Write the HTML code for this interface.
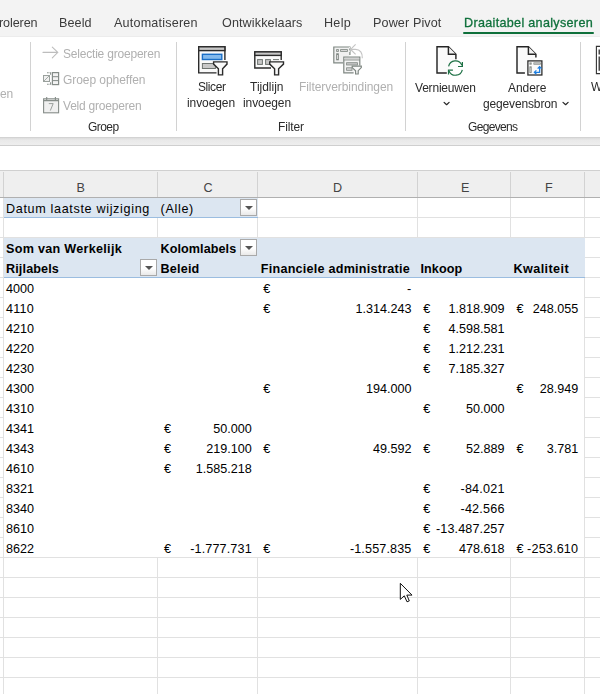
<!DOCTYPE html>
<html><head><meta charset="utf-8"><title>Excel</title>
<style>
html,body{margin:0;padding:0;}
body{width:600px;height:694px;overflow:hidden;position:relative;background:#fff;font-family:"Liberation Sans",sans-serif;}
.t{position:absolute;white-space:nowrap;line-height:normal;}
.g{will-change:transform;}
.a{position:absolute;}
.dd{position:absolute;width:15px;height:15px;border:1px solid #a9a9a9;background:linear-gradient(#fff 55%,#e9e9e9);}
.dd:after{content:"";position:absolute;left:3.6px;top:6.1px;border-left:4px solid transparent;border-right:4px solid transparent;border-top:4.4px solid #555;}
</style></head><body>
<!-- tab bar -->
<div class="a" style="left:0;top:0;width:600px;height:36px;background:#f3f3f3"></div>
<div class="a" style="left:0;top:36px;width:600px;height:1px;background:#ececec;z-index:1"></div>
<div class="a" style="left:463px;top:31.8px;width:131px;height:2.3px;background:#0f703b;border-radius:1.2px"></div>
<!-- ribbon -->
<div class="a" style="left:0;top:36px;width:600px;height:101px;background:#fff"></div>
<div class="a" style="left:0;top:137px;width:600px;height:8px;background:linear-gradient(#cdcdcd,#dfdfdf 18%,#e9e9e9 40%,#eeeeee)"></div>
<div class="a" style="left:0;top:145px;width:600px;height:1px;background:#cfcfcf"></div>
<div class="a" style="left:0;top:170px;width:600px;height:1px;background:#d0d0d0"></div>
<!-- ribbon separators -->
<div class="a" style="left:30px;top:42px;width:1px;height:89px;background:#d2d2d2"></div>
<div class="a" style="left:176px;top:42px;width:1px;height:89px;background:#d2d2d2"></div>
<div class="a" style="left:405px;top:42px;width:1px;height:89px;background:#d2d2d2"></div>
<div class="a" style="left:580px;top:42px;width:1px;height:89px;background:#d2d2d2"></div>
<!-- column header -->
<div class="a" style="left:0;top:171px;width:600px;height:26px;background:#efefef"></div>
<div class="a" style="left:0;top:197px;width:600px;height:1px;background:#b0b0b0"></div>
<!-- grid -->
<div class="a" style="left:0;top:217px;width:600px;height:1px;background:#e1e1e1"></div>
<div class="a" style="left:0;top:237px;width:600px;height:1px;background:#e1e1e1"></div>
<div class="a" style="left:0;top:257px;width:600px;height:1px;background:#e1e1e1"></div>
<div class="a" style="left:0;top:277px;width:600px;height:1px;background:#e1e1e1"></div>
<div class="a" style="left:0;top:297px;width:600px;height:1px;background:#e1e1e1"></div>
<div class="a" style="left:0;top:317px;width:600px;height:1px;background:#e1e1e1"></div>
<div class="a" style="left:0;top:337px;width:600px;height:1px;background:#e1e1e1"></div>
<div class="a" style="left:0;top:357px;width:600px;height:1px;background:#e1e1e1"></div>
<div class="a" style="left:0;top:377px;width:600px;height:1px;background:#e1e1e1"></div>
<div class="a" style="left:0;top:397px;width:600px;height:1px;background:#e1e1e1"></div>
<div class="a" style="left:0;top:417px;width:600px;height:1px;background:#e1e1e1"></div>
<div class="a" style="left:0;top:437px;width:600px;height:1px;background:#e1e1e1"></div>
<div class="a" style="left:0;top:457px;width:600px;height:1px;background:#e1e1e1"></div>
<div class="a" style="left:0;top:477px;width:600px;height:1px;background:#e1e1e1"></div>
<div class="a" style="left:0;top:497px;width:600px;height:1px;background:#e1e1e1"></div>
<div class="a" style="left:0;top:517px;width:600px;height:1px;background:#e1e1e1"></div>
<div class="a" style="left:0;top:537px;width:600px;height:1px;background:#e1e1e1"></div>
<div class="a" style="left:0;top:557px;width:600px;height:1px;background:#e1e1e1"></div>
<div class="a" style="left:0;top:577px;width:600px;height:1px;background:#e1e1e1"></div>
<div class="a" style="left:0;top:597px;width:600px;height:1px;background:#e1e1e1"></div>
<div class="a" style="left:0;top:617px;width:600px;height:1px;background:#e1e1e1"></div>
<div class="a" style="left:0;top:637px;width:600px;height:1px;background:#e1e1e1"></div>
<div class="a" style="left:0;top:657px;width:600px;height:1px;background:#e1e1e1"></div>
<div class="a" style="left:0;top:677px;width:600px;height:1px;background:#e1e1e1"></div>
<div class="a" style="left:3px;top:198px;width:1px;height:496px;background:#e1e1e1"></div>
<div class="a" style="left:3px;top:172px;width:1px;height:25px;background:#d2d2d2"></div>
<div class="a" style="left:157px;top:198px;width:1px;height:496px;background:#e1e1e1"></div>
<div class="a" style="left:157px;top:172px;width:1px;height:25px;background:#d2d2d2"></div>
<div class="a" style="left:257px;top:198px;width:1px;height:496px;background:#e1e1e1"></div>
<div class="a" style="left:257px;top:172px;width:1px;height:25px;background:#d2d2d2"></div>
<div class="a" style="left:417px;top:198px;width:1px;height:496px;background:#e1e1e1"></div>
<div class="a" style="left:417px;top:172px;width:1px;height:25px;background:#d2d2d2"></div>
<div class="a" style="left:510px;top:198px;width:1px;height:496px;background:#e1e1e1"></div>
<div class="a" style="left:510px;top:172px;width:1px;height:25px;background:#d2d2d2"></div>
<div class="a" style="left:584px;top:198px;width:1px;height:496px;background:#e1e1e1"></div>
<div class="a" style="left:584px;top:172px;width:1px;height:25px;background:#d2d2d2"></div>
<div class="a" style="left:4px;top:198px;width:254px;height:19px;background:#dce6f1"></div>
<div class="a" style="left:4px;top:217px;width:254px;height:1px;background:#9bbde0"></div>
<div class="a" style="left:4px;top:238px;width:581px;height:39px;background:#dce6f1"></div>
<div class="a" style="left:4px;top:277px;width:581px;height:1px;background:#9bbde0"></div>
<div class="a" style="left:4px;top:278px;width:580px;height:279px;background:#fff"></div>
<!--GRID-->
<!--ICONS-->
<svg class="a" style="left:0;top:0" width="600" height="140" viewBox="0 0 600 140" fill="none">
<!-- arrow (disabled) -->
<g stroke="#bdbdbd" stroke-width="1.1" stroke-linecap="round" stroke-linejoin="round">
<path d="M43 52.4H57.8M52.3 47.2L57.8 52.4L52.3 57.8"/>
</g>
<!-- group opheffen -->
<g stroke="#9aa19d" stroke-width="1">
<rect x="43.5" y="75.5" width="6" height="6" fill="#f0f0f0"/>
<path d="M44 81L49 76" stroke-width="0.9"/>
<path d="M47 72.8H48.7M49.5 72.8H50.6V74.7M47 84.2H48.7M49.5 84.2H50.6V82.3" stroke="#8d948f" stroke-width="1.1"/>
<rect x="52.4" y="72.6" width="6.2" height="12" stroke="#858c88" stroke-width="1.2" fill="#f3f3f3"/>
<path d="M52.4 76.7H58.6M52.4 80.6H58.6" stroke="#858c88"/>
</g>
<!-- calendar -->
<g stroke="#868d89" stroke-width="1.1">
<rect x="43.6" y="98.8" width="15" height="14" fill="#f0f0f0"/>
<path d="M43.6 100.6H58.6" stroke-width="1.3"/>
<path d="M46.7 97V100M55.4 97V100"/>
<path d="M48.8 103.6H53.2L50.3 110.6" stroke="#9a9f9c" stroke-width="1"/>
</g>
<!-- slicer -->
<g stroke="#2b2b2b" stroke-width="1.4" stroke-linejoin="miter">
<path d="M216.5 72.9H198.7V46.8H224.9V60" fill="#fafafa"/>
<rect x="198.7" y="46.8" width="26.2" height="3.8" fill="#c8c8c8"/>
<rect x="202.4" y="54.3" width="19.4" height="5.2" fill="#83b9ec" stroke="#1a6ec6"/>
<rect x="202.4" y="63.5" width="13" height="5" fill="#c8c8c8" stroke="#6e7471" stroke-width="1"/>
<path d="M213.6 61.9H227V64.1L222.6 68.8V74.9H218.4V68.8L213.6 64.1Z" fill="#fafafa"/>
</g>
<!-- tijdlijn -->
<g stroke="#2b2b2b" stroke-width="1.4">
<path d="M271 68H254.8V51.9H281.2V60" fill="#fafafa"/>
<rect x="254.8" y="51.9" width="26.4" height="3.5" fill="#c8c8c8"/>
<rect x="257.6" y="59.6" width="4.8" height="4.8" fill="#c8c8c8" stroke="#6e7471" stroke-width="1"/>
<rect x="265.6" y="59.6" width="4.8" height="4.8" fill="#c8c8c8" stroke="#6e7471" stroke-width="1"/>
<path d="M273 59.6H279" stroke="#6e7471" stroke-width="1"/>
<path d="M269.7 61.9H283.5V64.1L278.6 68.8V74.9H274.6V68.8L269.7 64.1Z" fill="#fafafa"/>
</g>
<!-- filterverbindingen (disabled) -->
<g stroke="#7f8782" stroke-width="1.2">
<path d="M343 62.8H333.8V47H349.9V55" fill="#f0f0f0"/>
<rect x="336.6" y="49.6" width="1.9" height="1.9" fill="#d6d6d6" stroke-width="0.8"/>
<rect x="340.6" y="49.6" width="6.9" height="1.9" fill="#d6d6d6" stroke-width="0.8"/>
<rect x="336.6" y="53.7" width="1.9" height="6.2" fill="#d6d6d6" stroke-width="0.8"/>
<path d="M348.6 47.6L350.6 49.4L348.6 51.2L350 52V47Z" fill="#fff" stroke="none"/>
<path d="M355.6 44.4L350.6 49.4L355.6 54.4" stroke="#c4c4c4" stroke-width="1.15"/>
<path d="M350.8 49.4H355.5C360.3 49.4 362.6 53 362.3 58.2" stroke="#c4c4c4" stroke-width="1.15"/>
<path d="M353.6 72.9H343.8V57.1H359.8V65.4" fill="#f4f4f4"/>
<path d="M344.4 58.6H359.2" stroke="#d2d2d2" stroke-width="1.9"/>
<path d="M343.8 60H359.8" stroke-width="0.8"/>
<rect x="346.6" y="62.7" width="10.8" height="2.3" fill="#c6c6c6" stroke-width="0.8"/>
<rect x="346.6" y="67.8" width="5.4" height="2.5" fill="#d4d4d4" stroke-width="0.8"/>
<path d="M352.2 66.1H361.3V67.6L358.2 70.7V74H355.6V70.7L352.2 67.6Z" fill="#fafafa" stroke-width="1.2"/>
</g>
<!-- vernieuwen -->
<g stroke="#262626" stroke-width="1.45">
<path d="M446.8 72.9H437V46.8H448.4L455.9 54.2V59.2" fill="#fafafa"/>
<path d="M448.4 46.8V54.2H455.9" fill="#f3f3f3"/>
</g>
<g stroke="#1e7145" stroke-width="1.2">
<path d="M448.6 66.3A7 7 0 0 1 461.9 65.2"/>
<path d="M462.3 69.8A7 7 0 0 1 449 70.9"/>
<path d="M458 66.5H462.4V62.1"/>
<path d="M452.9 70.1H448.5V74.5"/>
</g>
<!-- andere gegevensbron -->
<g stroke="#262626" stroke-width="1.45">
<path d="M524.9 72.9H517V46.8H528.4L535.9 54.2V57.6" fill="#fafafa"/>
<path d="M528.4 46.8V54.2H535.9" fill="#f3f3f3"/>
<rect x="527.9" y="60.9" width="14" height="14.1" fill="#fafafa" stroke-width="1.25"/>
</g>
<g stroke="#868d89" stroke-width="0.7" fill="#c6c6c6">
<rect x="529.8" y="62.8" width="1.5" height="1.5"/>
<rect x="533.8" y="62.8" width="6.8" height="1.5"/>
<rect x="529.8" y="66.7" width="1.5" height="6"/>
</g>
<g stroke="#1f7fe0" stroke-width="1.3" fill="none">
<path d="M534.8 72.3H539.6V67"/>
<path d="M536.4 70.4L534.4 72.3L536.4 74.2M537.7 68.6L539.6 66.6L541.5 68.6"/>
</g>
<!-- chevrons -->
<g stroke="#262626" stroke-width="1.25" fill="none" stroke-linecap="round" stroke-linejoin="round">
<path d="M444.1 102.4L446.6 104.7L449.1 102.4"/>
<path d="M563 102.4L565.6 104.7L568.1 102.4"/>
</g>
<!-- right cutoff icon -->
<g stroke="#333" stroke-width="1.1">
<path d="M601 46.4H596.4V73.6H601"/>
<path d="M599.4 49.6V54.6M599.4 56.4V70.8" stroke="#4a4a4a" stroke-width="1.8"/>
</g>
</svg>
<!-- dropdown buttons -->
<div class="dd" style="left:240px;top:199px"></div>
<div class="dd" style="left:240px;top:239px"></div>
<div class="dd" style="left:140px;top:259px"></div>
<!-- cursor -->
<svg class="a" style="left:398px;top:581px" width="18" height="24" viewBox="0 0 18 24">
<path d="M2.3 2.3V18.4L6.3 14.8L9 20.8L11.3 19.9L8.8 14.1H14Z" fill="#fff" stroke="#111" stroke-width="1" stroke-linejoin="miter"/>
</svg>
<span class="t g" style="left:-1.50px;top:15.60px;font-size:12.6px;color:#3b3b3b;letter-spacing:-0.100px;">roleren</span>
<span class="t g" style="left:58.90px;top:15.60px;font-size:12.6px;color:#3b3b3b;letter-spacing:0.076px;">Beeld</span>
<span class="t g" style="left:113.90px;top:15.60px;font-size:12.6px;color:#3b3b3b;letter-spacing:0.192px;">Automatiseren</span>
<span class="t g" style="left:221.50px;top:15.60px;font-size:12.6px;color:#3b3b3b;letter-spacing:0.108px;">Ontwikkelaars</span>
<span class="t g" style="left:324.00px;top:15.60px;font-size:12.6px;color:#3b3b3b;letter-spacing:0.273px;">Help</span>
<span class="t g" style="left:373.00px;top:15.60px;font-size:12.6px;color:#3b3b3b;letter-spacing:0.118px;">Power Pivot</span>
<span class="t g" style="left:463.50px;top:15.60px;font-size:12.6px;color:#0f703b;-webkit-text-stroke:0.3px #0f703b;letter-spacing:0.309px;">Draaitabel analyseren</span>
<span class="t g" style="left:62.90px;top:46.64px;font-size:12px;color:#b0b0b0;letter-spacing:-0.202px;">Selectie groeperen</span>
<span class="t g" style="left:62.90px;top:72.64px;font-size:12px;color:#b0b0b0;letter-spacing:-0.056px;">Groep opheffen</span>
<span class="t g" style="left:62.90px;top:98.64px;font-size:12px;color:#b0b0b0;letter-spacing:-0.215px;">Veld groeperen</span>
<span class="t g" style="left:88.40px;top:119.74px;font-size:12px;color:#2b2b2b;letter-spacing:-0.572px;">Groep</span>
<span class="t g" style="left:197.90px;top:79.84px;font-size:12px;color:#2b2b2b;letter-spacing:-0.419px;">Slicer</span>
<span class="t g" style="left:186.90px;top:96.04px;font-size:12px;color:#2b2b2b;letter-spacing:-0.090px;">invoegen</span>
<span class="t g" style="left:250.40px;top:79.84px;font-size:12px;color:#2b2b2b;letter-spacing:-0.008px;">Tijdlijn</span>
<span class="t g" style="left:242.90px;top:96.04px;font-size:12px;color:#2b2b2b;letter-spacing:-0.090px;">invoegen</span>
<span class="t g" style="left:298.90px;top:79.84px;font-size:12px;color:#b0b0b0;letter-spacing:-0.066px;">Filterverbindingen</span>
<span class="t g" style="left:277.60px;top:119.54px;font-size:12px;color:#2b2b2b;letter-spacing:-0.145px;">Filter</span>
<span class="t g" style="left:415.40px;top:80.84px;font-size:12px;color:#2b2b2b;letter-spacing:-0.202px;">Vernieuwen</span>
<span class="t g" style="left:507.70px;top:80.84px;font-size:12px;color:#2b2b2b;letter-spacing:-0.051px;">Andere</span>
<span class="t g" style="left:483.40px;top:96.64px;font-size:12px;color:#2b2b2b;letter-spacing:-0.147px;">gegevensbron</span>
<span class="t g" style="left:467.70px;top:119.74px;font-size:12px;color:#2b2b2b;letter-spacing:-0.663px;">Gegevens</span>
<span class="t g" style="left:591.00px;top:79.54px;font-size:12px;color:#2b2b2b;">W</span>
<span class="t g" style="left:-3.60px;top:87.14px;font-size:12px;color:#b0b0b0;letter-spacing:-0.048px;">ren</span>
<span class="t" style="left:76.50px;top:180.60px;font-size:12.6px;color:#444444;">B</span>
<span class="t" style="left:203.50px;top:180.60px;font-size:12.6px;color:#444444;">C</span>
<span class="t" style="left:333.00px;top:180.60px;font-size:12.6px;color:#444444;">D</span>
<span class="t" style="left:461.00px;top:180.60px;font-size:12.6px;color:#444444;">E</span>
<span class="t" style="left:545.00px;top:180.60px;font-size:12.6px;color:#444444;">F</span>
<span class="t" style="left:6.00px;top:201.70px;font-size:12.6px;color:#000000;letter-spacing:0.661px;">Datum laatste wijziging</span>
<span class="t" style="left:160.50px;top:201.70px;font-size:12.6px;color:#000000;letter-spacing:0.685px;">(Alle)</span>
<span class="t" style="left:6.00px;top:241.70px;font-size:12.6px;color:#000000;font-weight:700;letter-spacing:0.290px;">Som van Werkelijk</span>
<span class="t" style="left:160.50px;top:241.70px;font-size:12.6px;color:#000000;font-weight:700;letter-spacing:0.083px;">Kolomlabels</span>
<span class="t" style="left:6.00px;top:261.70px;font-size:12.6px;color:#000000;font-weight:700;letter-spacing:0.134px;">Rijlabels</span>
<span class="t" style="left:160.50px;top:261.70px;font-size:12.6px;color:#000000;font-weight:700;letter-spacing:0.201px;">Beleid</span>
<span class="t" style="left:260.80px;top:261.70px;font-size:12.6px;color:#000000;font-weight:700;letter-spacing:0.238px;">Financiele administratie</span>
<span class="t" style="left:420.50px;top:261.70px;font-size:12.6px;color:#000000;font-weight:700;letter-spacing:0.086px;">Inkoop</span>
<span class="t" style="left:513.50px;top:261.70px;font-size:12.6px;color:#000000;font-weight:700;letter-spacing:0.411px;">Kwaliteit</span>
<span class="t" style="left:6.00px;top:281.70px;font-size:12.6px;color:#000000;letter-spacing:-0.008px;">4000</span>
<span class="t" style="left:6.00px;top:301.70px;font-size:12.6px;color:#000000;letter-spacing:0.227px;">4110</span>
<span class="t" style="left:6.00px;top:321.70px;font-size:12.6px;color:#000000;letter-spacing:-0.008px;">4210</span>
<span class="t" style="left:6.00px;top:341.70px;font-size:12.6px;color:#000000;letter-spacing:-0.008px;">4220</span>
<span class="t" style="left:6.00px;top:361.70px;font-size:12.6px;color:#000000;letter-spacing:-0.008px;">4230</span>
<span class="t" style="left:6.00px;top:381.70px;font-size:12.6px;color:#000000;letter-spacing:-0.008px;">4300</span>
<span class="t" style="left:6.00px;top:401.70px;font-size:12.6px;color:#000000;letter-spacing:-0.008px;">4310</span>
<span class="t" style="left:6.00px;top:421.70px;font-size:12.6px;color:#000000;letter-spacing:-0.008px;">4341</span>
<span class="t" style="left:6.00px;top:441.70px;font-size:12.6px;color:#000000;letter-spacing:-0.008px;">4343</span>
<span class="t" style="left:6.00px;top:461.70px;font-size:12.6px;color:#000000;letter-spacing:-0.008px;">4610</span>
<span class="t" style="left:6.00px;top:481.70px;font-size:12.6px;color:#000000;letter-spacing:-0.008px;">8321</span>
<span class="t" style="left:6.00px;top:501.70px;font-size:12.6px;color:#000000;letter-spacing:-0.008px;">8340</span>
<span class="t" style="left:6.00px;top:521.70px;font-size:12.6px;color:#000000;letter-spacing:-0.008px;">8610</span>
<span class="t" style="left:6.00px;top:541.70px;font-size:12.6px;color:#000000;letter-spacing:-0.008px;">8622</span>
<span class="t" style="left:263.30px;top:281.70px;font-size:12.6px;color:#000000;">€</span>
<span class="t" style="left:407.10px;top:281.70px;font-size:12.6px;color:#000000;">-</span>
<span class="t" style="left:263.30px;top:301.70px;font-size:12.6px;color:#000000;">€</span>
<span class="t" style="left:355.50px;top:301.70px;font-size:12.6px;color:#000000;letter-spacing:-0.003px;">1.314.243</span>
<span class="t" style="left:423.30px;top:301.70px;font-size:12.6px;color:#000000;">€</span>
<span class="t" style="left:448.60px;top:301.70px;font-size:12.6px;color:#000000;letter-spacing:-0.003px;">1.818.909</span>
<span class="t" style="left:516.50px;top:301.70px;font-size:12.6px;color:#000000;">€</span>
<span class="t" style="left:532.70px;top:301.70px;font-size:12.6px;color:#000000;letter-spacing:-0.004px;">248.055</span>
<span class="t" style="left:423.30px;top:321.70px;font-size:12.6px;color:#000000;">€</span>
<span class="t" style="left:448.60px;top:321.70px;font-size:12.6px;color:#000000;letter-spacing:-0.003px;">4.598.581</span>
<span class="t" style="left:423.30px;top:341.70px;font-size:12.6px;color:#000000;">€</span>
<span class="t" style="left:448.60px;top:341.70px;font-size:12.6px;color:#000000;letter-spacing:-0.003px;">1.212.231</span>
<span class="t" style="left:423.30px;top:361.70px;font-size:12.6px;color:#000000;">€</span>
<span class="t" style="left:448.60px;top:361.70px;font-size:12.6px;color:#000000;letter-spacing:-0.003px;">7.185.327</span>
<span class="t" style="left:263.30px;top:381.70px;font-size:12.6px;color:#000000;">€</span>
<span class="t" style="left:366.00px;top:381.70px;font-size:12.6px;color:#000000;letter-spacing:-0.004px;">194.000</span>
<span class="t" style="left:516.50px;top:381.70px;font-size:12.6px;color:#000000;">€</span>
<span class="t" style="left:539.70px;top:381.70px;font-size:12.6px;color:#000000;letter-spacing:-0.005px;">28.949</span>
<span class="t" style="left:423.30px;top:401.70px;font-size:12.6px;color:#000000;">€</span>
<span class="t" style="left:466.10px;top:401.70px;font-size:12.6px;color:#000000;letter-spacing:-0.005px;">50.000</span>
<span class="t" style="left:164.00px;top:421.70px;font-size:12.6px;color:#000000;">€</span>
<span class="t" style="left:213.30px;top:421.70px;font-size:12.6px;color:#000000;letter-spacing:-0.005px;">50.000</span>
<span class="t" style="left:164.00px;top:441.70px;font-size:12.6px;color:#000000;">€</span>
<span class="t" style="left:206.30px;top:441.70px;font-size:12.6px;color:#000000;letter-spacing:-0.004px;">219.100</span>
<span class="t" style="left:263.30px;top:441.70px;font-size:12.6px;color:#000000;">€</span>
<span class="t" style="left:373.00px;top:441.70px;font-size:12.6px;color:#000000;letter-spacing:-0.005px;">49.592</span>
<span class="t" style="left:423.30px;top:441.70px;font-size:12.6px;color:#000000;">€</span>
<span class="t" style="left:466.10px;top:441.70px;font-size:12.6px;color:#000000;letter-spacing:-0.005px;">52.889</span>
<span class="t" style="left:516.50px;top:441.70px;font-size:12.6px;color:#000000;">€</span>
<span class="t" style="left:546.70px;top:441.70px;font-size:12.6px;color:#000000;letter-spacing:-0.003px;">3.781</span>
<span class="t" style="left:164.00px;top:461.70px;font-size:12.6px;color:#000000;">€</span>
<span class="t" style="left:195.80px;top:461.70px;font-size:12.6px;color:#000000;letter-spacing:-0.003px;">1.585.218</span>
<span class="t" style="left:423.30px;top:481.70px;font-size:12.6px;color:#000000;">€</span>
<span class="t" style="left:460.50px;top:481.70px;font-size:12.6px;color:#000000;letter-spacing:0.197px;">-84.021</span>
<span class="t" style="left:423.30px;top:501.70px;font-size:12.6px;color:#000000;">€</span>
<span class="t" style="left:460.50px;top:501.70px;font-size:12.6px;color:#000000;letter-spacing:0.197px;">-42.566</span>
<span class="t" style="left:423.30px;top:521.70px;font-size:12.6px;color:#000000;">€</span>
<span class="t" style="left:436.00px;top:521.70px;font-size:12.6px;color:#000000;letter-spacing:0.124px;">-13.487.257</span>
<span class="t" style="left:164.00px;top:541.70px;font-size:12.6px;color:#000000;">€</span>
<span class="t" style="left:190.20px;top:541.70px;font-size:12.6px;color:#000000;letter-spacing:0.137px;">-1.777.731</span>
<span class="t" style="left:263.30px;top:541.70px;font-size:12.6px;color:#000000;">€</span>
<span class="t" style="left:349.90px;top:541.70px;font-size:12.6px;color:#000000;letter-spacing:0.137px;">-1.557.835</span>
<span class="t" style="left:423.30px;top:541.70px;font-size:12.6px;color:#000000;">€</span>
<span class="t" style="left:459.10px;top:541.70px;font-size:12.6px;color:#000000;letter-spacing:-0.004px;">478.618</span>
<span class="t" style="left:516.50px;top:541.70px;font-size:12.6px;color:#000000;">€</span>
<span class="t" style="left:527.10px;top:541.70px;font-size:12.6px;color:#000000;letter-spacing:0.173px;">-253.610</span>
</body></html>
